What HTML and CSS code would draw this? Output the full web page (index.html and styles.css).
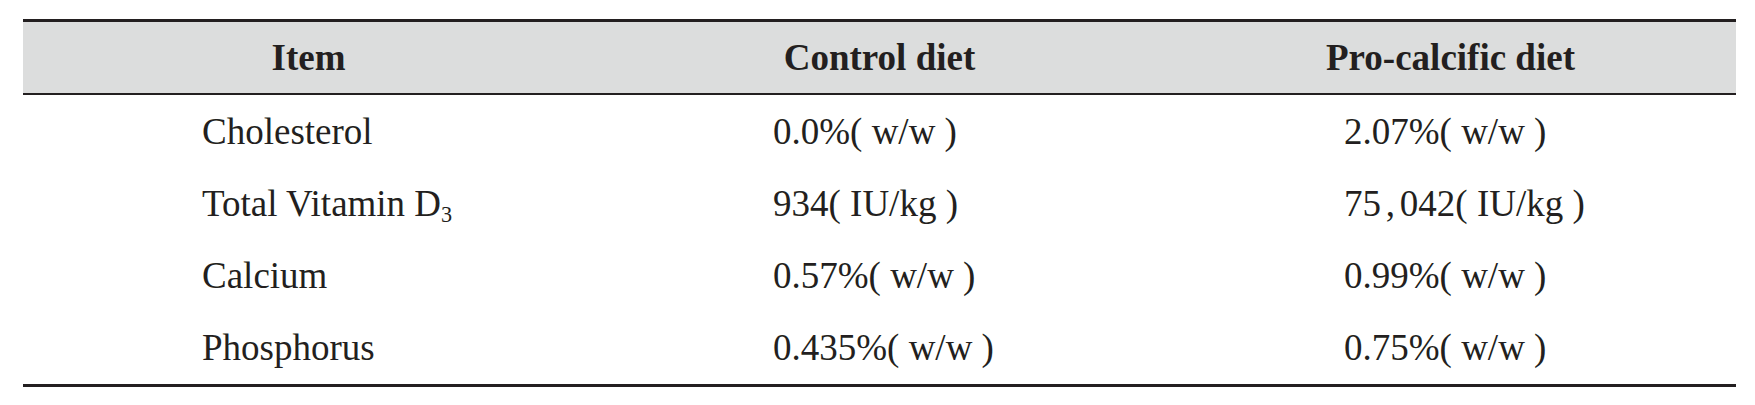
FILE: index.html
```html
<!DOCTYPE html>
<html lang="en">
<head>
<meta charset="utf-8">
<title>Diet composition</title>
<link rel="stylesheet" href="styles.css">
</head>
<body>
<div class="table">
  <div class="row head">
    <div class="cell">Item</div>
    <div class="cell">Control diet</div>
    <div class="cell">Pro-calcific diet</div>
  </div>
  <div class="row">
    <div class="cell">Cholesterol</div>
    <div class="cell">0.0%( w/w )</div>
    <div class="cell">2.07%( w/w )</div>
  </div>
  <div class="row">
    <div class="cell">Total Vitamin D<sub class="sub">3</sub></div>
    <div class="cell">934( IU/kg )</div>
    <div class="cell">75<span class="sep">,</span>042( IU/kg )</div>
  </div>
  <div class="row">
    <div class="cell">Calcium</div>
    <div class="cell">0.57%( w/w )</div>
    <div class="cell">0.99%( w/w )</div>
  </div>
  <div class="row">
    <div class="cell">Phosphorus</div>
    <div class="cell">0.435%( w/w )</div>
    <div class="cell">0.75%( w/w )</div>
  </div>
</div>
</body>
</html>
```
FILE: styles.css
```css
html, body {
  margin: 0;
  padding: 0;
  background: #ffffff;
}

body {
  font-family: "Liberation Serif", "Times New Roman", serif;
  font-size: 37px;
  color: #231f20;
}

.table {
  margin: 19px 0 0 23px;
  width: 1713px;
  border-top: 3px solid #231f20;
  border-bottom: 3px solid #231f20;
}

.row {
  display: grid;
  grid-template-columns: repeat(3, 1fr);
  align-items: center;
  height: 72.25px;
}

.cell {
  padding-left: 179px;
  white-space: nowrap;
  line-height: normal;
}

.head {
  height: 71px;
  background: #dcdddd;
  border-bottom: 2px solid #231f20;
}

.head .cell {
  padding-left: 0;
  text-align: center;
  font-weight: 700;
}

.sub {
  font-size: 0.6em;
  vertical-align: -0.25em;
  line-height: 0;
}

.sep {
  padding: 0 0.13em;
}
```
